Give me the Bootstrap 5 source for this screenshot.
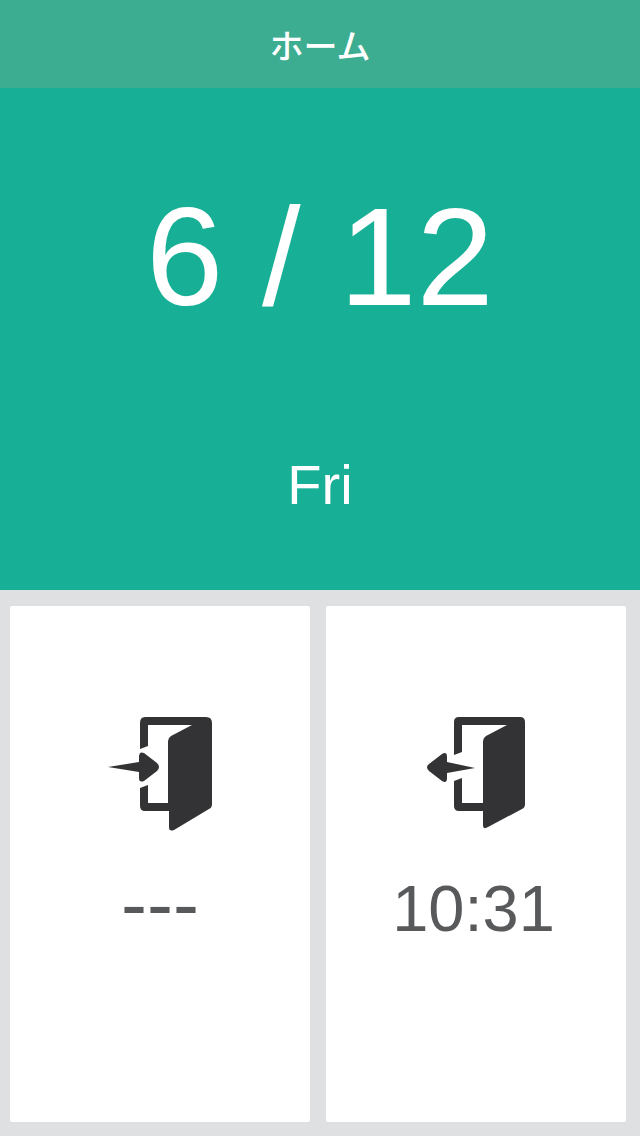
<!DOCTYPE html>
<html lang="ja">
<head>
<meta charset="utf-8">
<title>ホーム</title>
<link href="https://cdn.jsdelivr.net/npm/bootstrap@5.3.0/dist/css/bootstrap.min.css" rel="stylesheet">
<style>
html, body { height: 100%; }
body { background: #dfe0e1; font-family: "Liberation Sans", "Noto Sans CJK JP", sans-serif; }
.app-shell { height: 1136px; width: 640px; overflow: hidden; }
.app-title { height: 88px; background: #3dad92; color: #fff; font-size: 34px; font-weight: 500; font-family: "Noto Sans CJK JP", sans-serif; }
.date-panel { height: 502px; background: #17af95; color: #fff; }
.date-main { font-size: 139px; line-height: 1; height: 158px; margin-top: 99px; }
.date-day { font-size: 56px; line-height: 1; margin-top: 112px; }
.stamps { height: 516px; margin: 16px 14px 14px 10px; gap: 16px; }
.stamp-box { flex: 1 1 0; background: #fff; border-radius: 2px; padding-top: 94px; }
.door { width: 140px; height: 138px; display: block; }
.stamp-time { font-size: 65px; line-height: 1; color: #58595b; margin-top: 36px; }
.stamp-time-left { margin-right: 5px; margin-top: 38px; }
.stamp-none { font-size: 78px; margin-top: 27px; }
</style>
</head>
<body>
<div class="app-shell d-flex flex-column">
  <div class="app-title d-flex align-items-center justify-content-center">ホーム</div>
  <div class="date-panel d-flex flex-column align-items-center">
    <div class="date-main">6 / 12</div>
    <div class="date-day">Fri</div>
  </div>
  <div class="stamps d-flex">
    <div class="stamp-box d-flex flex-column align-items-center">
      <svg class="door" viewBox="90 700 140 138" fill="#333335" aria-label="出勤">
        <path d="M145 717H206Q212 717 212 723V804Q212 808 209 809L174 830Q169 832 169 827V811H145Q140 811 140 806V788L148 785V803H168V741Q168 738 171 736L192 725H148V746L140 749V723Q140 717 145 717Z"/>
        <path d="M108 767L139 762V757Q139 751 144 753L157 763Q161 767 157 771L144 781Q139 783 139 778V772Z"/>
      </svg>
      <div class="stamp-time stamp-none">---</div>
    </div>
    <div class="stamp-box d-flex flex-column align-items-center">
      <svg class="door" viewBox="406 700 140 138" fill="#333335" aria-label="退勤">
        <path d="M459 717H520Q525 717 525 722V804Q525 808 522 809L488 827Q483 830 483 825V811H459Q454 811 454 806V781L462 778V803H483V741Q483 738 486 736L507 725H462V752L454 755V722Q454 717 459 717Z"/>
        <path d="M475 768L447 762V757Q447 751 442 754L429 764Q425 767 429 771L442 781Q447 784 447 778V773Z"/>
      </svg>
      <div class="stamp-time stamp-time-left">10:31</div>
    </div>
  </div>
</div>
<script src="https://cdn.jsdelivr.net/npm/bootstrap@5.3.0/dist/js/bootstrap.bundle.min.js"></script>
</body>
</html>
